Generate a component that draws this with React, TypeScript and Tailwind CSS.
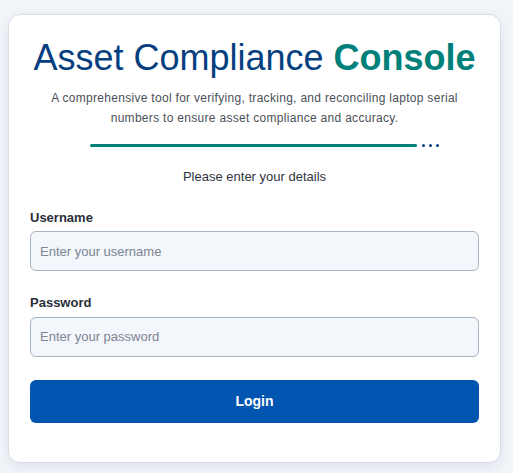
import React from 'react';

export default function App() {
  return (
    <div className="min-h-screen bg-[#f1f4f9] pl-[8px] pt-[14px] pb-3 font-['Liberation_Sans',Arial,sans-serif]">
      <div className="w-[493px] rounded-xl border border-[#d8dde6] bg-white px-[21px] pt-[21px] pb-[39px] shadow-[0_4px_12px_rgba(30,41,59,0.08)]">
        {/* Header */}
        <div className="flex flex-col items-center">
          <h1 className="whitespace-nowrap text-[36px] leading-[44px] text-[#063f80]">
            Asset Compliance <span className="font-bold text-[#00807a]">Console</span>
          </h1>
          <p className="mt-[8px] text-center text-[12px] leading-[20px] tracking-[0.3px] text-[#4a4f58]">
            A comprehensive tool for verifying, tracking, and reconciling laptop serial
            <br />
            numbers to ensure asset compliance and accuracy.
          </p>
          <div className="mt-[16px] flex items-center gap-[5px] pl-[19px]">
            <div className="h-[3px] w-[327px] rounded-full bg-[#00807a]"></div>
            <div className="flex gap-[4px]">
              <span className="h-[3px] w-[3px] rounded-full bg-[#063f80]"></span>
              <span className="h-[3px] w-[3px] rounded-full bg-[#063f80]"></span>
              <span className="h-[3px] w-[3px] rounded-full bg-[#063f80]"></span>
            </div>
          </div>
          <p className="mt-[20px] text-[13px] text-[#2f3540]">Please enter your details</p>
        </div>

        {/* Form */}
        <form className="mt-[21px] flex flex-col" onSubmit={(e) => e.preventDefault()}>
          <label className="text-[13px] font-bold text-[#2a2f38]">Username</label>
          <input
            type="text"
            placeholder="Enter your username"
            className="mt-[4px] h-[40px] w-full rounded-md border border-[#a9b4c2] bg-[#f3f6fb] px-[9px] text-[13px] text-[#2a2f38] placeholder:text-[#7b8593] outline-none"
          />
          <label className="mt-[22px] text-[13px] font-bold text-[#2a2f38]">Password</label>
          <input
            type="password"
            placeholder="Enter your password"
            className="mt-[4px] h-[40px] w-full rounded-md border border-[#a9b4c2] bg-[#f3f6fb] px-[9px] text-[13px] text-[#2a2f38] placeholder:text-[#7b8593] outline-none"
          />
          <button
            type="submit"
            className="mt-[23px] h-[43px] w-full rounded-md bg-[#0055b0] text-[14px] font-bold text-white"
          >
            Login
          </button>
        </form>
      </div>
    </div>
  );
}
